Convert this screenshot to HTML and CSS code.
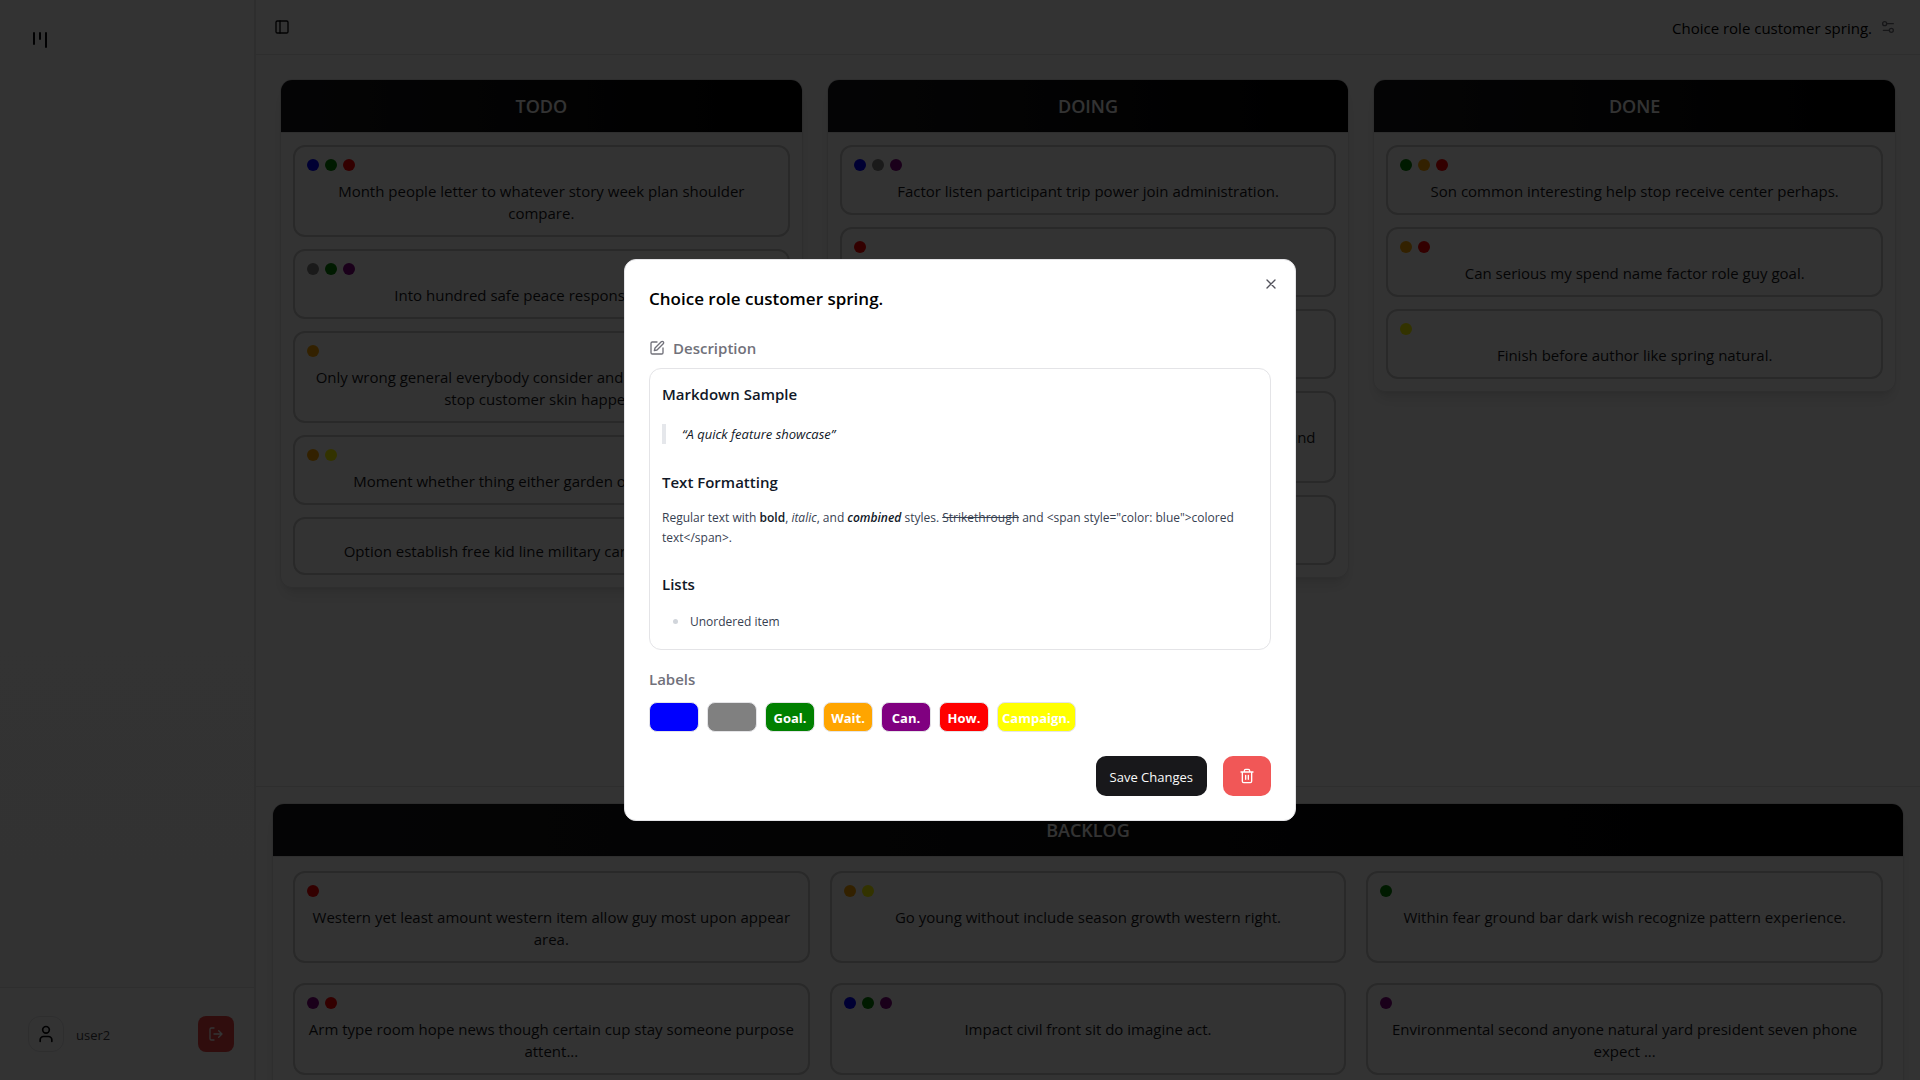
FILE: index.html
```html
<!DOCTYPE html>
<html lang="en">
<head>
<meta charset="utf-8">
<title>Board</title>
<link rel="stylesheet" href="styles.css">
</head>
<body>
<div class="app">
  <aside class="sidebar">
    <a class="logo" href="#" aria-label="Home"><svg class="icon-lg" viewBox="0 0 24 24"><path d="M6 5v11M12 5v6M18 5v14"/></svg></a>
    <div class="account">
      <span class="avatar"><svg class="icon-md" viewBox="0 0 24 24"><path d="M19 21v-2a4 4 0 0 0-4-4H9a4 4 0 0 0-4 4v2"/><circle cx="12" cy="7" r="4"/></svg></span>
      <span class="username">user2</span>
      <button class="logout" type="button" aria-label="Log out"><svg class="icon" viewBox="0 0 24 24"><path d="M9 21H5a2 2 0 0 1-2-2V5a2 2 0 0 1 2-2h4M16 17l5-5-5-5M21 12H9"/></svg></button>
    </div>
  </aside>
  <main class="main">
    <header class="topbar">
      <button class="ghost" type="button" aria-label="Toggle sidebar"><svg class="icon" viewBox="0 0 24 24"><rect x="3" y="3" width="18" height="18" rx="2"/><path d="M9 3v18"/></svg></button>
      <div class="project">
        <span>Choice role customer spring.</span>
        <button class="ghost muted" type="button" aria-label="Board settings"><svg class="icon" viewBox="0 0 24 24"><path d="M20 7h-9M14 17H5"/><circle cx="17" cy="17" r="3"/><circle cx="7" cy="7" r="3"/></svg></button>
      </div>
    </header>
    <div class="board">
      <section class="column">
        <h2 class="column-title">TODO</h2>
        <div class="column-cards">
          <article class="card"><div class="dots"><i class="dot blue"></i><i class="dot green"></i><i class="dot red"></i></div><p>Month people letter to whatever story week plan shoulder compare.</p></article>
          <article class="card"><div class="dots"><i class="dot gray"></i><i class="dot green"></i><i class="dot purple"></i></div><p>Into hundred safe peace responsibility up.</p></article>
          <article class="card"><div class="dots"><i class="dot orange"></i></div><p>Only wrong general everybody consider and particular situations stop customer skin happen.</p></article>
          <article class="card"><div class="dots"><i class="dot orange"></i><i class="dot yellow"></i></div><p>Moment whether thing either garden or the policy up.</p></article>
          <article class="card"><div class="dots"></div><p>Option establish free kid line military care someone else.</p></article>
        </div>
      </section>
      <section class="column">
        <h2 class="column-title">DOING</h2>
        <div class="column-cards">
          <article class="card"><div class="dots"><i class="dot blue"></i><i class="dot gray"></i><i class="dot purple"></i></div><p>Factor listen participant trip power join administration.</p></article>
          <article class="card"><div class="dots"><i class="dot red"></i></div><p>Table.</p></article>
          <article class="card"><div class="dots"><i class="dot red"></i></div><p>Table.</p></article>
          <article class="card"><div class="dots"><i class="dot red"></i></div><p>Program general environment course behind message all around table.</p></article>
          <article class="card"><div class="dots"><i class="dot red"></i></div><p>Table.</p></article>
        </div>
      </section>
      <section class="column">
        <h2 class="column-title">DONE</h2>
        <div class="column-cards">
          <article class="card"><div class="dots"><i class="dot green"></i><i class="dot orange"></i><i class="dot red"></i></div><p>Son common interesting help stop receive center perhaps.</p></article>
          <article class="card"><div class="dots"><i class="dot orange"></i><i class="dot red"></i></div><p>Can serious my spend name factor role guy goal.</p></article>
          <article class="card"><div class="dots"><i class="dot yellow"></i></div><p>Finish before author like spring natural.</p></article>
        </div>
      </section>
    </div>
    <div class="backlog">
      <section class="column">
        <h2 class="column-title">BACKLOG</h2>
        <div class="backlog-cards">
          <article class="card"><div class="dots"><i class="dot red"></i></div><p>Western yet least amount western item allow guy most upon appear area.</p></article>
          <article class="card"><div class="dots"><i class="dot orange"></i><i class="dot yellow"></i></div><p>Go young without include season growth western right.</p></article>
          <article class="card"><div class="dots"><i class="dot green"></i></div><p>Within fear ground bar dark wish recognize pattern experience.</p></article>
          <article class="card"><div class="dots"><i class="dot purple"></i><i class="dot red"></i></div><p>Arm type room hope news though certain cup stay someone purpose attent...</p></article>
          <article class="card"><div class="dots"><i class="dot blue"></i><i class="dot green"></i><i class="dot purple"></i></div><p>Impact civil front sit do imagine act.</p></article>
          <article class="card"><div class="dots"><i class="dot purple"></i></div><p>Environmental second anyone natural yard president seven phone expect ...</p></article>
        </div>
      </section>
    </div>
  </main>
</div>
<div class="overlay">
  <div class="dialog" role="dialog" aria-modal="true" aria-labelledby="dialog-title">
    <button class="close" type="button" aria-label="Close"><svg class="icon" viewBox="0 0 24 24"><path d="M18 6 6 18M6 6l12 12"/></svg></button>
    <h1 class="dialog-title" id="dialog-title">Choice role customer spring.</h1>
    <h2 class="label with-icon"><svg class="icon" viewBox="0 0 24 24"><path d="M12 3H5a2 2 0 0 0-2 2v14a2 2 0 0 0 2 2h14a2 2 0 0 0 2-2v-7"/><path d="M18.375 2.625a2.121 2.121 0 1 1 3 3L12 15l-4 1 1-4Z"/></svg><span>Description</span></h2>
    <div class="description">
      <h3>Markdown Sample</h3>
      <blockquote>“A quick feature showcase”</blockquote>
      <h3>Text Formatting</h3>
      <p>Regular text with <strong>bold</strong>, <em>italic</em>, and <strong><em>combined</em></strong> styles. <del>Strikethrough</del> and &lt;span style="color: blue"&gt;colored text&lt;/span&gt;.</p>
      <h3>Lists</h3>
      <ul><li>Unordered item</li></ul>
    </div>
    <h2 class="label">Labels</h2>
    <div class="badges">
      <button class="badge blue" type="button" aria-label="Blue"></button>
      <button class="badge gray" type="button" aria-label="Gray"></button>
      <button class="badge green" type="button">Goal.</button>
      <button class="badge orange" type="button">Wait.</button>
      <button class="badge purple" type="button">Can.</button>
      <button class="badge red" type="button">How.</button>
      <button class="badge yellow" type="button">Campaign.</button>
    </div>
    <div class="actions">
      <button class="save" type="button">Save Changes</button>
      <button class="delete" type="button" aria-label="Delete"><svg class="icon" viewBox="0 0 24 24"><path d="M3 6h18M19 6v14a2 2 0 0 1-2 2H7a2 2 0 0 1-2-2V6M8 6V4a2 2 0 0 1 2-2h4a2 2 0 0 1 2 2v2M10 11v6M14 11v6"/></svg></button>
    </div>
  </div>
</div>
</body>
</html>
```
FILE: styles.css
```css
* { box-sizing: border-box; margin: 0; padding: 0; }
body { font-family: "Open Sans", "Noto Sans", sans-serif; font-size: 13px; line-height: 20px; color: #09090b; background: #fff; }
button { font: inherit; color: inherit; border: 0; background: none; display: flex; align-items: center; justify-content: center; }
svg { fill: none; stroke: currentColor; stroke-width: 2; stroke-linecap: round; stroke-linejoin: round; flex: none; }
.icon { width: 16px; height: 16px; }
.icon-md { width: 20px; height: 20px; }
.icon-lg { width: 24px; height: 24px; }

.app { display: flex; height: 100vh; overflow: hidden; }
.sidebar { width: 256px; flex: none; display: flex; flex-direction: column; justify-content: space-between; border-right: 2px solid #e4e4e7; background: linear-gradient(#fff, #fafafa); }
.logo { padding: 28px; color: inherit; }
.account { display: flex; align-items: center; gap: 12px; padding: 28px 20px 28px 28px; border-top: 1px solid #e4e4e7; background: #fff; }
.avatar { display: flex; align-items: center; justify-content: center; width: 36px; height: 36px; border: 1px solid #e4e4e7; border-radius: 12px; }
.username { flex: 1; padding-top: 2px; color: #3f3f46; }
.logout { width: 36px; height: 36px; border-radius: 8px; background: #ef4444; color: #fff; }

.main { flex: 1; min-width: 0; display: flex; flex-direction: column; }
.topbar { display: flex; align-items: center; justify-content: space-between; padding: 15px 24px 15px 18px; border-bottom: 1px solid #e4e4e7; }
.ghost { height: 24px; }
.muted { color: #71717a; }
.project { display: flex; align-items: center; gap: 8px; font-size: 15px; line-height: 24px; font-weight: 500; color: #000; }
.project span { padding-top: 2px; line-height: 22px; }
.board { flex: 1; min-height: 0; display: grid; grid-template-columns: repeat(3, minmax(0, 1fr)); align-items: start; gap: 24px; padding: 24px; }
.column { border: 1px solid #e4e4e7; border-radius: 12px; overflow: hidden; background: #fff; box-shadow: 0 10px 15px -3px rgba(0, 0, 0, .1), 0 4px 6px -4px rgba(0, 0, 0, .1); }
.column-title { padding: 12px; border-bottom: 1px solid #e4e4e7; font-size: 18px; line-height: 28px; font-weight: 600; text-align: center; color: #fff; background: linear-gradient(90deg, #18181b, #000) padding-box; }
.column-cards { display: flex; flex-direction: column; gap: 12px; padding: 12px; }
.card { padding: 12px 12px 11px; border: 2px solid #cacaca; border-radius: 12px; font-size: 15px; line-height: 22px; font-weight: 500; text-align: center; color: #18181b; }
.dots { display: flex; gap: 6px; margin-bottom: 9px; }
.dot { width: 12px; height: 12px; border-radius: 50%; }
.blue { background: blue; }
.gray { background: gray; }
.green { background: green; }
.orange { background: orange; }
.purple { background: purple; }
.red { background: red; }
.yellow { background: yellow; }
.backlog { flex: none; height: 294px; padding: 16px; border-top: 1px solid #e4e4e7; }
.backlog-cards { display: grid; grid-template-columns: repeat(3, minmax(0, 1fr)); gap: 20px; padding: 14px 20px 20px; }

.overlay { position: fixed; inset: 0; display: flex; align-items: center; justify-content: center; background: rgba(0, 0, 0, .8); }
.dialog { position: relative; width: 672px; padding: 24px; border: 1px solid #e4e4e7; border-radius: 12px; background: #fff; }
.close { position: absolute; top: 16px; right: 16px; color: #52525b; }
.dialog-title { padding: 1px 0 3px; font-size: 17px; line-height: 28px; font-weight: 600; color: #000; }
.label { font-size: 15px; line-height: 24px; font-weight: 600; color: #71717a; }
.with-icon { display: flex; align-items: center; gap: 8px; margin: 20px 0 8px; }
.description { margin-bottom: 17px; padding: 11px 12px 12px; border: 1px solid #e4e4e7; border-radius: 12px; color: #374151; }
.description h3 { font-size: 15px; line-height: 28px; font-weight: 600; color: #111827; }
.description strong { font-weight: 600; color: #111827; }
.description blockquote { margin: 16px 0 24px; padding-left: 16px; border-left: 4px solid #e5e7eb; font-style: italic; color: #111827; }
.description p { margin: 12px 0 22px; font-size: 12px; }
.description ul { margin: 12px 0 5px; padding-left: 28px; font-size: 12px; }
.description li::marker { color: #d1d5db; font-size: 15px; }
.badges { display: flex; gap: 8px; margin: 11px 0 24px; }
.badge { min-width: 50px; height: 30px; padding: 1px 4px 0; border: 1px solid #e4e4e7; border-radius: 8px; font-weight: 700; color: #fff; }
.actions { display: flex; justify-content: flex-end; gap: 16px; }
.save { height: 40px; padding: 1px 14px 0; border-radius: 10px; background: #18181b; color: #fafafa; }
.delete { width: 48px; height: 40px; border-radius: 10px; background: #f15757; color: #fff; }
```
